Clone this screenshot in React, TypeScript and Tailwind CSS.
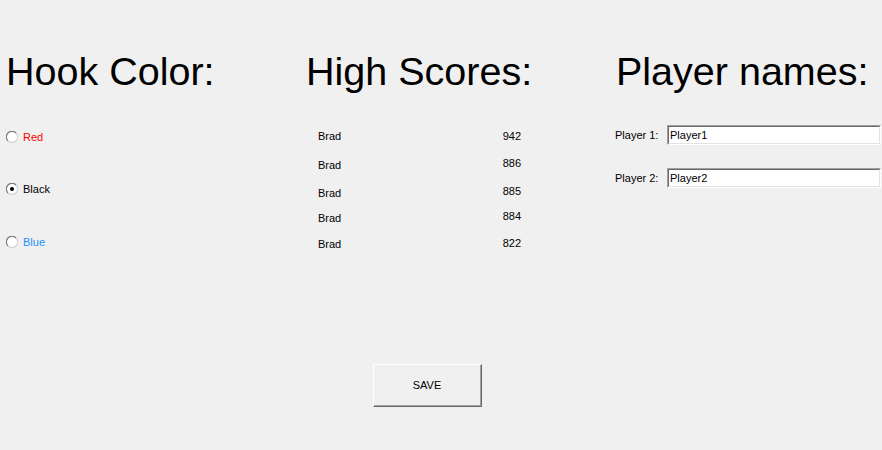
import { useState } from 'react';

const scores = [
  { name: 'Brad', score: 942, h: 'h-[29px]', off: 'mt-0' },
  { name: 'Brad', score: 886, h: 'h-[28px]', off: '-mt-[2px]' },
  { name: 'Brad', score: 885, h: 'h-[25px]', off: '-mt-[2px]' },
  { name: 'Brad', score: 884, h: 'h-[26px]', off: '-mt-[2px]' },
  { name: 'Brad', score: 822, h: 'h-[14px]', off: '-mt-[1px]' },
];

function Radio({ checked }: { checked: boolean }) {
  return (
    <svg width="12" height="12" viewBox="0 0 12 12" className="shrink-0">
      <circle cx="6" cy="6" r="5.6" fill="#fff" />
      <path d="M2 10 A5.6 5.6 0 0 1 10 2" fill="none" stroke="#7a7a7a" strokeWidth="1.2" />
      <path d="M10 2 A5.6 5.6 0 0 1 2 10" fill="none" stroke="#d4d4d4" strokeWidth="1.2" />
      {checked && <circle cx="6" cy="6" r="2" fill="#000" />}
    </svg>
  );
}

function TextBox({ value }: { value: string }) {
  return (
    <div className="w-[214px] h-[20px] border-t border-l border-[#a0a0a0] border-b-white border-r-white border-b border-r">
      <div className="h-full border-t border-l border-[#696969] border-b border-r border-b-[#e3e3e3] border-r-[#e3e3e3] bg-white flex items-center pl-[1px] text-[11px] leading-[13px] text-black">
        {value}
      </div>
    </div>
  );
}

export default function App() {
  const [color, setColor] = useState('black');

  const colors = [
    { key: 'red', label: 'Red', cls: 'text-[#ff0000]', mt: 'mt-[36px]' },
    { key: 'black', label: 'Black', cls: 'text-black', mt: 'mt-[32px]' },
    { key: 'blue', label: 'Blue', cls: 'text-[#1e90ff]', mt: 'mt-[33px]' },
  ];

  return (
    <div className="w-[882px] h-[450px] bg-[#f0f0f0] overflow-hidden flex flex-col font-['Liberation_Sans',Arial,sans-serif] text-black">
      <div className="h-[364px] flex pt-[51px]">
        {/* hook color */}
        <div className="w-[306px] pl-[6px] flex flex-col">
          <h1 className="text-[39.5px] leading-[40px] font-normal">Hook Color:</h1>
          {colors.map((c) => (
            <div
              key={c.key}
              className={`${c.mt} h-[20px] flex items-center gap-[5px] cursor-default`}
              onClick={() => setColor(c.key)}
            >
              <Radio checked={color === c.key} />
              <span className={`text-[11px] leading-[13px] ${c.cls}`}>{c.label}</span>
            </div>
          ))}
        </div>

        {/* high scores */}
        <div className="w-[309px] flex flex-col">
          <h1 className="text-[39.5px] leading-[40px] font-normal">High Scores:</h1>
          <div className="mt-[38px] w-[215px] pl-[12px] flex flex-col text-[11px] leading-[14px]">
            {scores.map((s, i) => (
              <div key={i} className={`${s.h} flex justify-between items-start`}>
                <span>{s.name}</span>
                <span className={s.off}>{s.score}</span>
              </div>
            ))}
          </div>
        </div>

        {/* player names */}
        <div className="flex-1 flex flex-col">
          <h1 className="text-[39.5px] leading-[40px] font-normal pl-[1px] whitespace-nowrap">Player names:</h1>
          <div className="mt-[34px] flex items-center gap-[9px]">
            <span className="text-[11px] leading-[13px] w-[43px] whitespace-nowrap">Player 1:</span>
            <TextBox value="Player1" />
          </div>
          <div className="mt-[23px] flex items-center gap-[9px]">
            <span className="text-[11px] leading-[13px] w-[43px] whitespace-nowrap">Player 2:</span>
            <TextBox value="Player2" />
          </div>
        </div>
      </div>

      <div className="pl-[373px]">
        <button className="w-[109px] h-[43px] bg-[#f0f0f0] border-t border-l border-white border-b border-r border-b-[#696969] border-r-[#696969] text-[11px] text-black">
          <div className="w-full h-full border-b border-r border-[#a0a0a0] flex items-center justify-center">
            SAVE
          </div>
        </button>
      </div>
    </div>
  );
}
